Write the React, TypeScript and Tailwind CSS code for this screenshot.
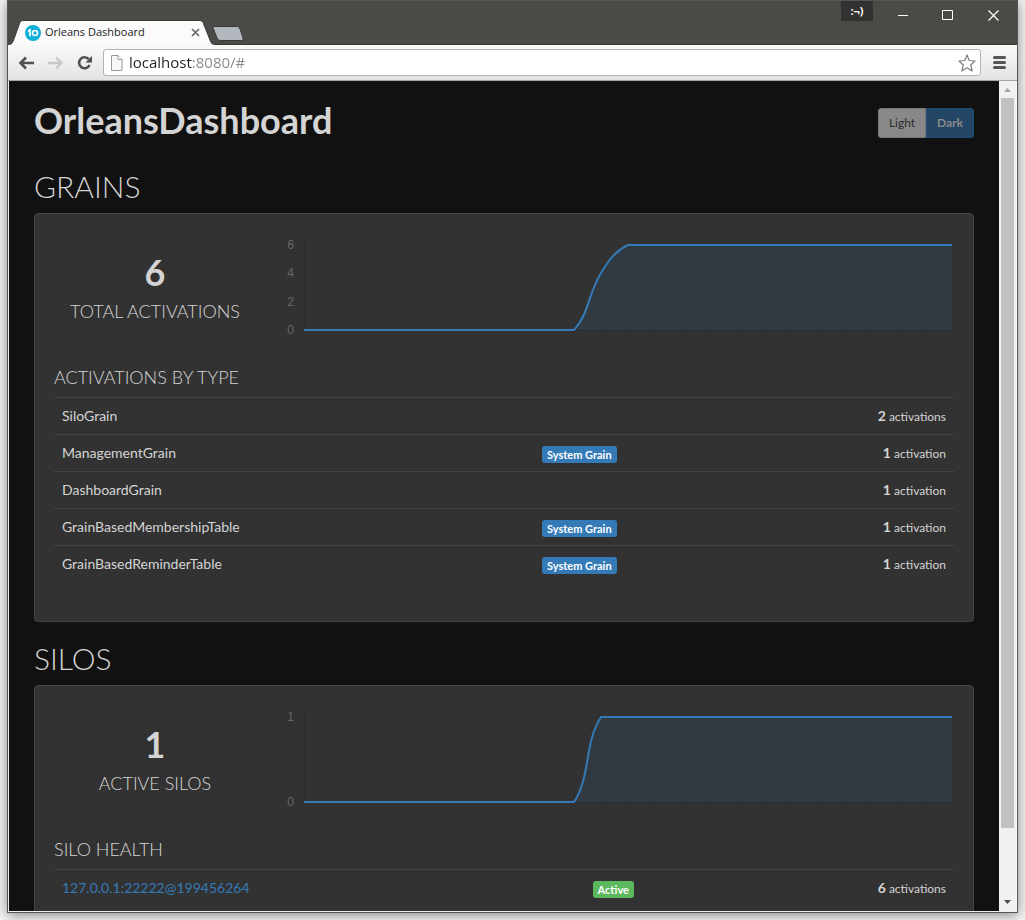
import { useState } from "react";
import type { ReactNode } from "react";

type Row = { name: string; tag?: string; count: number; href?: string };

const grainRows: Row[] = [
  { name: "SiloGrain", count: 2 },
  { name: "ManagementGrain", tag: "System Grain", count: 1 },
  { name: "DashboardGrain", count: 1 },
  { name: "GrainBasedMembershipTable", tag: "System Grain", count: 1 },
  { name: "GrainBasedReminderTable", tag: "System Grain", count: 1 },
];

const siloRows: Row[] = [
  { name: "127.0.0.1:22222@199456264", tag: "Active", count: 6, href: "#" },
];

function TabBar() {
  return (
    <header className="flex h-11 shrink-0 justify-between border-b border-[#393835] bg-[#4b4a47]">
      <div className="flex items-end">
        <div className="relative -mb-px h-[25px] w-[208px]">
          <svg className="absolute inset-0" width="208" height="25" viewBox="0 0 208 25" aria-hidden="true">
            <path d="M0 25C4 25 5 22 6 19L11 5C12 1.5 13 .5 16 .5H190C194 .5 195 1.5 196 5L202 20C203 23 204 25 208 25Z" fill="#f9f9f9" stroke="#393835" strokeWidth="1" />
            <path d="M1 25C4 25 6 22 7 19L12 5C13 2 14 1 16 1H190C193 1 194 2 195 5L201 20C202 23 204 25 207 25Z" fill="#fbfbfb" />
          </svg>
          <div className="relative flex h-full items-center gap-1 pr-[14px] pl-[17px]">
            <svg width="16" height="16" viewBox="0 0 16 16" className="shrink-0" aria-hidden="true">
              <circle cx="8" cy="8" r="8" fill="#0fb0d8" />
              <path d="M3 6.2L5 4.8V11.2" fill="none" stroke="#fff" strokeWidth="1.7" />
              <circle cx="10" cy="8" r="2.5" fill="none" stroke="#fff" strokeWidth="1.6" />
            </svg>
            <span className="flex-1 text-[11px] whitespace-nowrap text-[#222]">Orleans Dashboard</span>
            <button type="button" aria-label="Close tab" className="p-0.5">
              <svg width="9" height="9" viewBox="0 0 9 9" aria-hidden="true">
                <path d="M1 1L8 8M8 1L1 8" stroke="#666" strokeWidth="1.7" />
              </svg>
            </button>
          </div>
        </div>
        <button type="button" aria-label="New tab" className="-ml-1 mb-[3px]">
          <svg width="32" height="15" viewBox="0 0 32 15" aria-hidden="true">
            <path d="M2 .5H24C26 .5 27 1 28 3L31 12C31.500 14 31 14.500 29 14.500H9C7 14.500 6 14 5 12L1.500 3C.8 1 1 .5 2 .5Z" fill="#b3b8bf" stroke="#393835" />
          </svg>
        </button>
      </div>
      <div className="flex items-start pr-[9px]">
        <button type="button" className="flex h-5 w-8 items-center justify-center bg-[#333230] text-[11px] font-bold text-white">
          :¬)
        </button>
        <div className="flex gap-[17px] pl-[14px]">
          <button type="button" aria-label="Minimize" className="flex h-7 w-[29px] justify-end pt-[9px]">
            <svg width="18" height="11" viewBox="0 0 18 11" className="mr-1" aria-hidden="true">
              <path d="M4 5.500H14" stroke="#fff" />
            </svg>
          </button>
          <button type="button" aria-label="Maximize" className="flex h-7 w-[29px] justify-center pt-[9px]">
            <svg width="11" height="11" viewBox="0 0 11 11" aria-hidden="true">
              <path d="M.5 .5H10.500V9.500H.5Z" fill="none" stroke="#fff" />
            </svg>
          </button>
          <button type="button" aria-label="Close" className="flex h-7 w-[29px] justify-center pt-[9px]">
            <svg width="11" height="11" viewBox="0 0 11 11" aria-hidden="true">
              <path d="M.5 .5L10.500 10.500M10.500 .5L.5 10.500" stroke="#fff" strokeWidth="1.2" />
            </svg>
          </button>
        </div>
      </div>
    </header>
  );
}

function Toolbar() {
  return (
    <nav className="flex h-9 shrink-0 items-center border-b border-[#a3a3a3] bg-linear-to-b from-[#f9f9f9] to-[#e3e3e3] pr-[11px] pl-[10px]">
      <button type="button" aria-label="Back">
        <svg width="17" height="16" viewBox="0 0 17 16" aria-hidden="true">
          <path d="M16 8H3M8 2.500L2.500 8L8 13.500" fill="none" stroke="#505050" strokeWidth="2.600" />
        </svg>
      </button>
      <button type="button" aria-label="Forward" className="ml-3">
        <svg width="17" height="16" viewBox="0 0 17 16" aria-hidden="true">
          <path d="M1 8H14M9 2.500L14.500 8L9 13.500" fill="none" stroke="#c8c8c8" strokeWidth="2.400" />
        </svg>
      </button>
      <button type="button" aria-label="Reload" className="ml-3">
        <svg width="17" height="16" viewBox="0 0 17 16" aria-hidden="true">
          <path d="M12.800 4.200A5.500 5.500 0 1 0 13.600 10" fill="none" stroke="#505050" strokeWidth="2.600" />
          <path d="M16 1V7.500H9.500Z" fill="#505050" />
        </svg>
      </button>
      <div className="ml-[10px] flex h-[27px] flex-1 items-center rounded-[3px] border border-[#b4b4b4] bg-white pr-1 pl-[6px]">
        <svg width="13" height="16" viewBox="0 0 13 16" className="shrink-0" aria-hidden="true">
          <path d="M1.500 .5H8L12 4.500V15.500H1.500Z" fill="#f7f7f7" stroke="#999" />
          <path d="M8 .5V4.500H12" fill="#fff" stroke="#999" />
        </svg>
        <input
          type="text"
          aria-label="Address"
          defaultValue="localhost:8080/#"
          className="ml-[6px] min-w-0 flex-1 bg-[linear-gradient(90deg,#222_63px,#888_63px)] bg-clip-text text-[15px] text-transparent outline-none"
        />
        <button type="button" aria-label="Bookmark">
          <svg width="18" height="18" viewBox="0 0 18 18" aria-hidden="true">
            <path d="M9 1L11.200 6.500L17 7L12.700 11L14.200 17L9 13.800L3.800 17L5.300 11L1 7L6.800 6.500Z" fill="#fff" stroke="#808080" strokeWidth="1.200" strokeLinejoin="round" />
          </svg>
        </button>
      </div>
      <button type="button" aria-label="Menu" className="ml-3">
        <svg width="13" height="13" viewBox="0 0 13 13" aria-hidden="true">
          <path d="M1.500 1.500H11.500M1.500 6.500H11.500M1.500 11.500H11.500" stroke="#555" strokeWidth="3" strokeLinecap="round" />
        </svg>
      </button>
    </nav>
  );
}

function ScrollBar() {
  return (
    <div className="flex w-[18px] shrink-0 flex-col items-center border-r border-[#fafafa] bg-[#f1f1f1]" aria-hidden="true">
      <svg width="17" height="17" viewBox="0 0 17 17" className="shrink-0">
        <path d="M5 11L8.500 7L12 11Z" fill="#a3a3a3" />
      </svg>
      <div className="h-[88%] w-[13px] bg-[#c1c1c1]" />
      <svg width="17" height="17" viewBox="0 0 17 17" className="mt-auto shrink-0">
        <path d="M5 6L8.500 10L12 6Z" fill="#505050" />
      </svg>
    </div>
  );
}

function Chart({ label, ticks, path }: { label: string; ticks: number[]; path: string }) {
  const max = ticks[ticks.length - 1];
  const yOf = (value: number) => 97 - (85 * value) / max;
  return (
    <svg viewBox="0 0 682 110" className="w-full" role="img" aria-label={label}>
      {Array.from({ length: 25 }, (_, i) => (
        <path key={i} d={`M${32.5 + i * 27} 9V101`} stroke="#000" strokeOpacity={i === 0 ? 0.1 : 0.05} />
      ))}
      {ticks.map((tick) => (
        <g key={tick}>
          <path d={`M27 ${Math.round(yOf(tick)) + 0.5}H682`} stroke="#000" strokeOpacity={tick === 0 ? 0.12 : 0.05} />
          <text x="22" y={yOf(tick) + 4} textAnchor="end" fontSize="12" fill="#666" className="font-['Liberation_Sans',sans-serif]">
            {tick}
          </text>
        </g>
      ))}
      <path d={`${path}V97H32Z`} fill="#337ab7" fillOpacity="0.12" />
      <path d={path} fill="none" stroke="#337ab7" strokeWidth="2" />
    </svg>
  );
}

type TableProps = { rows: Row[]; nameStyle: string; tagStyle: string };

function ActivityTable({ rows, nameStyle, tagStyle }: TableProps) {
  return (
    <table className="mb-5 w-full text-sm leading-5">
      <tbody>
        {rows.map((row) => (
          <tr key={row.name} className="border-t border-[#444]">
            <td className={`p-2 ${nameStyle}`}>
              {row.href ? (
                <a href={row.href} className="text-[#337ab7]">
                  {row.name}
                </a>
              ) : (
                row.name
              )}
            </td>
            <td className="p-2">
              {row.tag && (
                <span className={`inline-block rounded-[3px] px-[5px] align-middle text-[11px] leading-[17px] font-bold whitespace-nowrap text-white ${tagStyle}`}>
                  {row.tag}
                </span>
              )}
            </td>
            <td className="p-2 text-right whitespace-nowrap">
              <strong>{row.count}</strong>
              <span className="text-xs"> {row.count === 1 ? "activation" : "activations"}</span>
            </td>
          </tr>
        ))}
      </tbody>
    </table>
  );
}

type PanelProps = {
  title: string;
  total: number;
  caption: string;
  chart: ReactNode;
  heading: string;
  children: ReactNode;
};

function Panel({ title, total, caption, chart, heading, children }: PanelProps) {
  return (
    <section className="mb-[19px]">
      <h2 className="mb-[9px] text-[30px] leading-[35px] font-light">{title}</h2>
      <div className="rounded border border-[#444] bg-[#323232] p-[19px]">
        <div className="grid grid-cols-[202px_1fr] gap-x-4">
          <div className="pt-[19px] text-center">
            <p className="text-4xl leading-10 font-bold">{total}</p>
            <p className="mt-[9px] text-lg leading-5 font-light">{caption}</p>
          </div>
          {chart}
        </div>
        <h4 className="mt-6 mb-[10px] text-lg leading-5 font-light">{heading}</h4>
        {children}
      </div>
    </section>
  );
}

export default function App() {
  const [theme, setTheme] = useState("dark");
  return (
    <div className="h-screen overflow-hidden bg-[#f4f4f4] px-[7px] pb-[7px] font-['Open_Sans',sans-serif]">
      <div className="flex h-full flex-col border border-[#555] shadow-[0_2px_12px_rgba(0,0,0,0.45)]">
        <TabBar />
        <Toolbar />
        <div className="flex min-h-0 flex-1 border-b border-l border-[#eee]">
          <main className="flex-1 overflow-hidden bg-[#111] px-[25px] font-[Lato,sans-serif] text-[#d4d4d4]">
            <div className="mt-[18px] mb-7 flex items-center justify-between">
              <h1 className="text-4xl leading-[42px] font-bold">OrleansDashboard</h1>
              <div className="mt-1.5 flex text-xs leading-[18px]">
                <button
                  type="button"
                  aria-pressed={theme === "light"}
                  onClick={() => setTheme("light")}
                  className="w-12 rounded-l-[3px] border border-[#777] bg-[#888] py-[5px] text-[#2b2b2b]"
                >
                  Light
                </button>
                <button
                  type="button"
                  aria-pressed={theme === "dark"}
                  onClick={() => setTheme("dark")}
                  className="w-12 rounded-r-[3px] border border-[#204d74] bg-[#234566] py-[5px] font-bold text-[#8a8a8a]"
                >
                  Dark
                </button>
              </div>
            </div>
            <Panel
              title="GRAINS"
              total={6}
              caption="TOTAL ACTIVATIONS"
              heading="ACTIVATIONS BY TYPE"
              chart={
                <Chart
                  label="Total activations over time"
                  ticks={[0, 2, 4, 6]}
                  path="M32 97H302C317 81 316 61 329 40C337 27 343 18 356 12H680"
                />
              }
            >
              <ActivityTable rows={grainRows} nameStyle="w-8/15" tagStyle="bg-[#337ab7]" />
            </Panel>
            <Panel
              title="SILOS"
              total={1}
              caption="ACTIVE SILOS"
              heading="SILO HEALTH"
              chart={
                <Chart
                  label="Active silos over time"
                  ticks={[0, 1]}
                  path="M32 97H302C319 71 312 38 329 12H680"
                />
              }
            >
              <ActivityTable rows={siloRows} nameStyle="w-auto" tagStyle="bg-[#5cb85c]" />
            </Panel>
          </main>
          <ScrollBar />
        </div>
      </div>
    </div>
  );
}
